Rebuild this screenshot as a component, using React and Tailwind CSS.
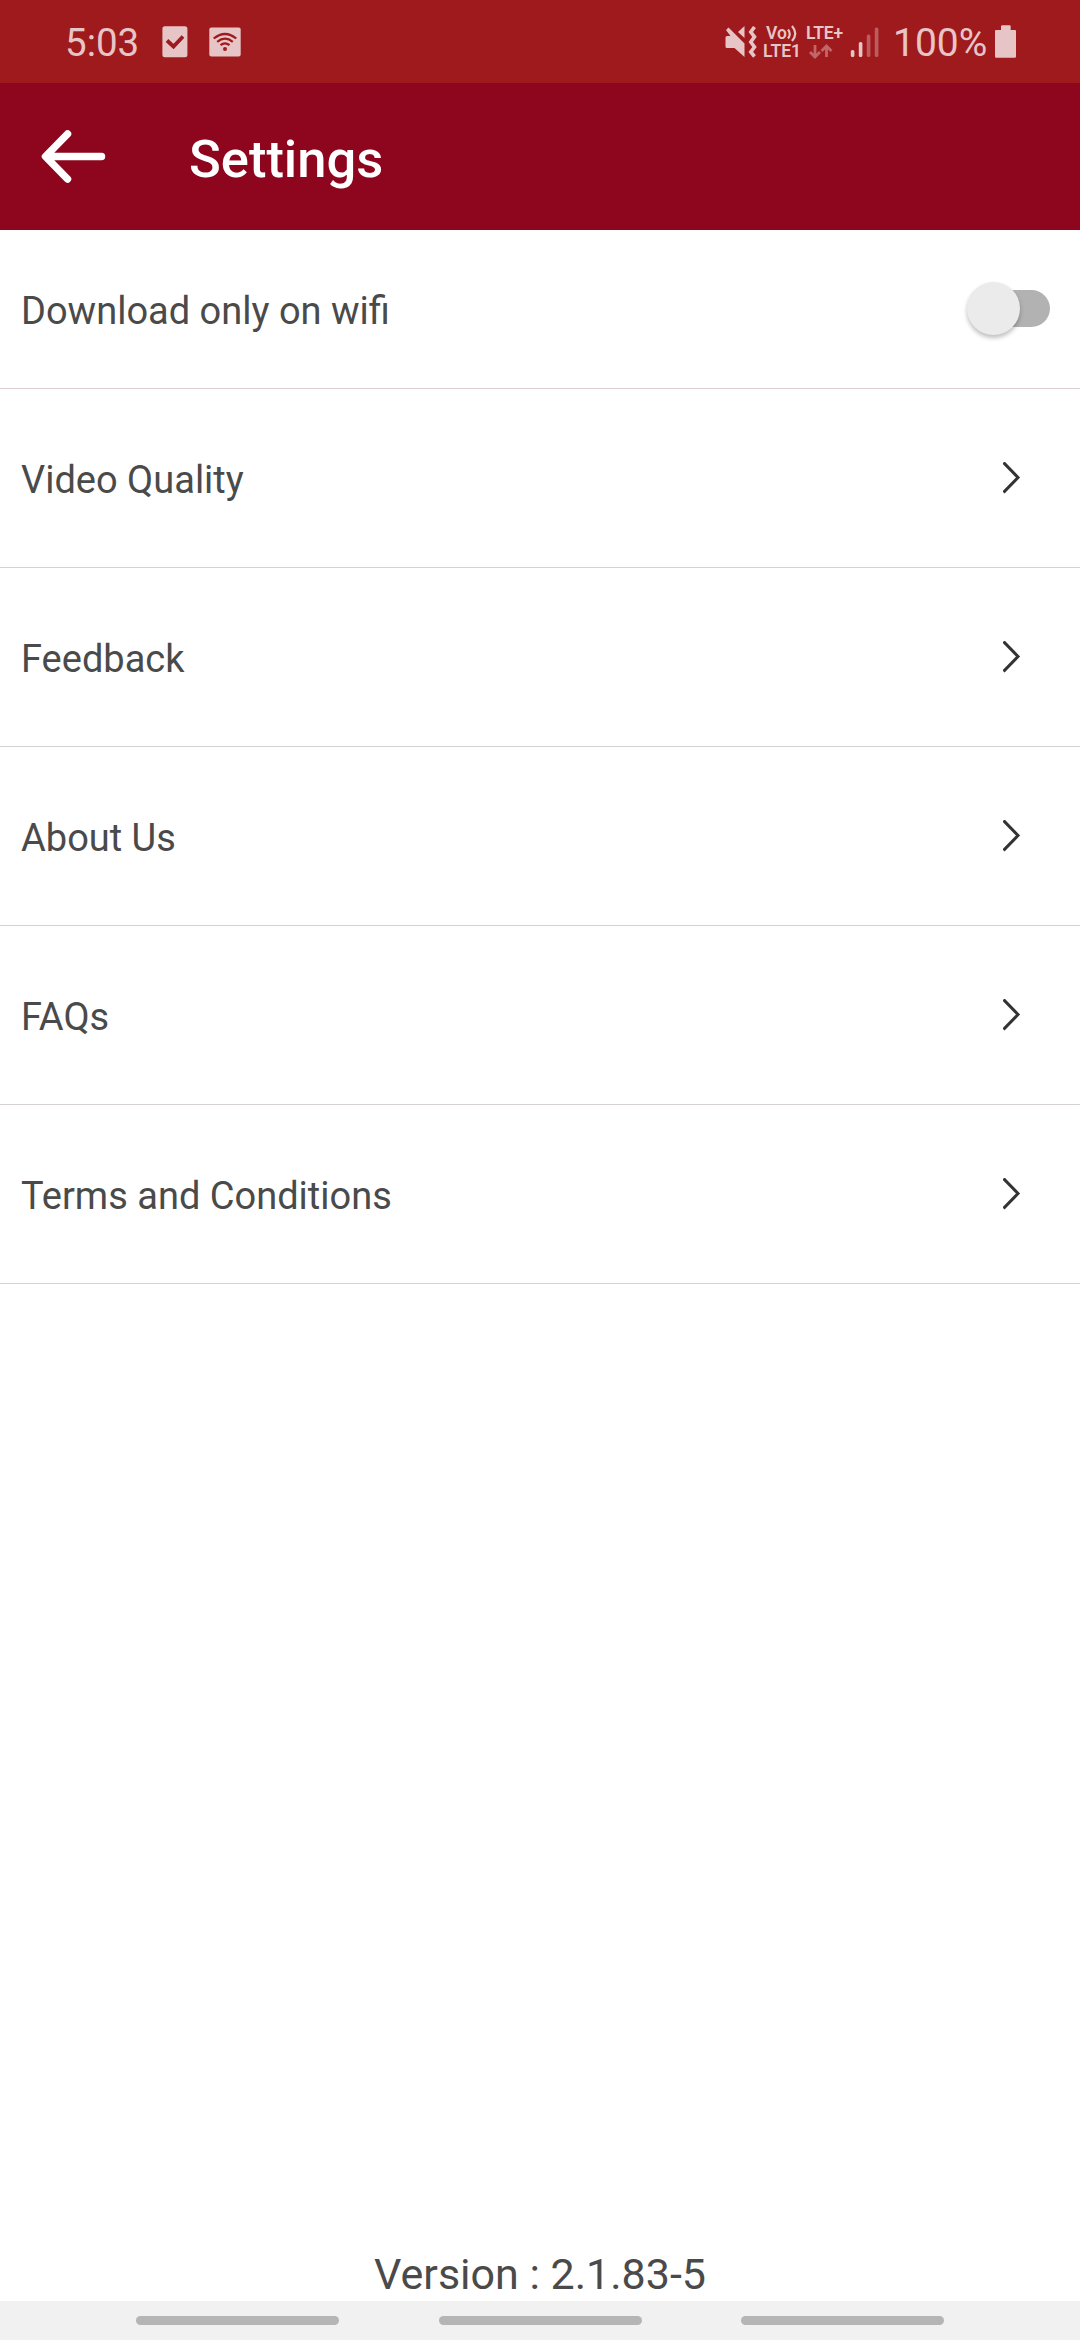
const tint = '#e7c5c7';

function StatusBar() {
  return (
    <div className="flex h-[83px] items-center bg-[#9f1a1c] text-[#e7c5c7]">
      <span className="ml-[65px] w-[97px] shrink-0 pt-1 text-[38.5px] leading-none">5:03</span>
      <svg className="shrink-0" width="26" height="32" viewBox="0 0 26 32">
        <rect x="0.4" y="0.3" width="25" height="31" rx="2.5" fill={tint} />
        <path d="M5 14.5l6.500 6L21 10.500" fill="none" stroke="#9f1a1c" strokeWidth="3.8" />
      </svg>
      <svg className="ml-[21px] shrink-0" width="32" height="30" viewBox="0 0 32 30">
        <rect x="0.3" y="0.5" width="31.4" height="29" rx="2" fill={tint} />
        <g fill="none" stroke="#9f1a1c" strokeWidth="2.2">
          <path d="M4.7 11.5Q16 2.5 27.3 11.5" />
          <path d="M8.2 14.8Q16 8.4 23.8 14.8" />
          <path d="M11.5 18.2Q16 14.4 20.5 18.2" />
        </g>
        <circle cx="16" cy="22" r="2" fill="#9f1a1c" />
      </svg>
      <svg className="ml-[484px] shrink-0" width="32" height="32" viewBox="0 0 32 32">
        <path d="M0.5 11.5Q0.5 10 2 10H5.500L1 4L3.500 1.500L19.500 17.500V31L9.500 22H2Q0.5 22 0.5 20.500Z" fill={tint} />
        <path d="M13 6L19.5 0V12Z" fill={tint} />
        <path d="M29.5 1L25.8 6L29.5 10.8L25.8 16L29.5 21L25.8 26L29.5 30.5" fill="none" stroke={tint} strokeWidth="3.6" />
      </svg>
      <div className="ml-[6px] grid h-[36px] w-[87px] shrink-0 grid-rows-2 text-[17.5px] leading-[18px] font-semibold">
        <div className="flex">
          <span className="ml-[3px] w-[21px]">Vo</span>
          <svg width="11" height="18" viewBox="0 0 11 18" className="shrink-0">
            <path d="M1 5.500Q4.500 10 1 14.500M5 2Q11.500 9.500 5 17" fill="none" stroke={tint} strokeWidth="2.2" />
          </svg>
          <span className="ml-[8px] tracking-[-0.2px]">LTE+</span>
        </div>
        <div className="flex">
          <span className="w-[46px]">LTE1</span>
          <svg width="24" height="18" viewBox="0 0 24 18" className="shrink-0">
            <path d="M6 3V15M1 10L6 15L11 10M17.5 15V4M12.5 9L17.5 4L22.5 9" fill="none" stroke="#c16769" strokeWidth="2.8" />
          </svg>
        </div>
      </div>
      <svg className="shrink-0" width="29" height="32" viewBox="0 0 29 32">
        <rect x="0.8" y="24" width="3.6" height="7" rx="1.5" fill={tint} />
        <rect x="8.8" y="16" width="3.6" height="15" rx="1.5" fill={tint} />
        <rect x="16.8" y="8.5" width="3.6" height="22.5" rx="1.5" fill="#bd5c5f" />
        <rect x="24.8" y="1.5" width="3.6" height="29.5" rx="1.5" fill="#bd5c5f" />
      </svg>
      <span className="ml-[14px] w-[102px] shrink-0 pt-1 text-[39px] leading-none">100%</span>
      <svg className="shrink-0" width="22" height="33" viewBox="0 0 22 33">
        <path d="M6 5V1.5Q6 0.3 7.2 0.3H14.5Q15.7 0.3 15.7 1.5V5H20Q21 5 21 6V31.5Q21 32.7 19.8 32.7H1.2Q0 32.7 0 31.5V6Q0 5 1 5Z" fill={tint} />
      </svg>
    </div>
  );
}

function Header() {
  return (
    <header className="flex h-[147px] items-center bg-[#8d061d] text-white">
      <svg className="ml-[40px] shrink-0" width="68" height="56" viewBox="0 0 68 56">
        <path d="M27.5 5L5.5 27.500L27.5 50M6 27.500H61.500" fill="none" stroke="#fff" strokeWidth="7.5" strokeLinecap="round" strokeLinejoin="round" />
      </svg>
      <h1 className="ml-[81px] pt-1.5 text-[52.5px] leading-none font-medium">Settings</h1>
    </header>
  );
}

function Toggle() {
  return (
    <div className="mr-[30px] mb-px relative h-[37px] w-[77px] rounded-full bg-[#b2b2b2]">
      <div className="absolute -top-2 -left-[6px] size-[53px] rounded-full bg-[#ebebeb] shadow-[0_3px_4px_rgba(0,0,0,0.25)]" />
    </div>
  );
}

const links = ['Video Quality', 'Feedback', 'About Us', 'FAQs', 'Terms and Conditions'];

export default function App() {
  return (
    <div className="flex h-[2340px] w-[1080px] flex-col overflow-hidden bg-white font-[Roboto,sans-serif] text-[#4a4a4a]">
      <StatusBar />
      <Header />
      <main className="flex flex-1 flex-col text-[38px] leading-none">
        <div className="flex h-[159px] items-center justify-between border-b border-[#dccfcf] pl-[21px]">
          <span className="pt-1">Download only on wifi</span>
          <Toggle />
        </div>
        {links.map((label) => (
          <div key={label} className="flex h-[179px] items-center justify-between border-b border-[#d6d2d3] pl-[21px]">
            <span className="pt-1">{label}</span>
            <svg className="mr-[59px]" width="18" height="32" viewBox="0 0 18 32">
              <path d="M0.500 0.500L15 15.500L0.500 30.500" fill="none" stroke="#333" strokeWidth="3" />
            </svg>
          </div>
        ))}
        <p className="mt-auto h-[49px] text-center text-[43px] leading-[44px]">Version : 2.1.83-5</p>
      </main>
      <nav className="flex h-[39px] gap-[99.5px] bg-[#f1f1f1] pt-[15px] pl-[136px]">
        <div className="h-[9px] w-[203px] rounded-full bg-[#b5b5b5]" />
        <div className="h-[9px] w-[203px] rounded-full bg-[#b5b5b5]" />
        <div className="h-[9px] w-[203px] rounded-full bg-[#b5b5b5]" />
      </nav>
    </div>
  );
}
